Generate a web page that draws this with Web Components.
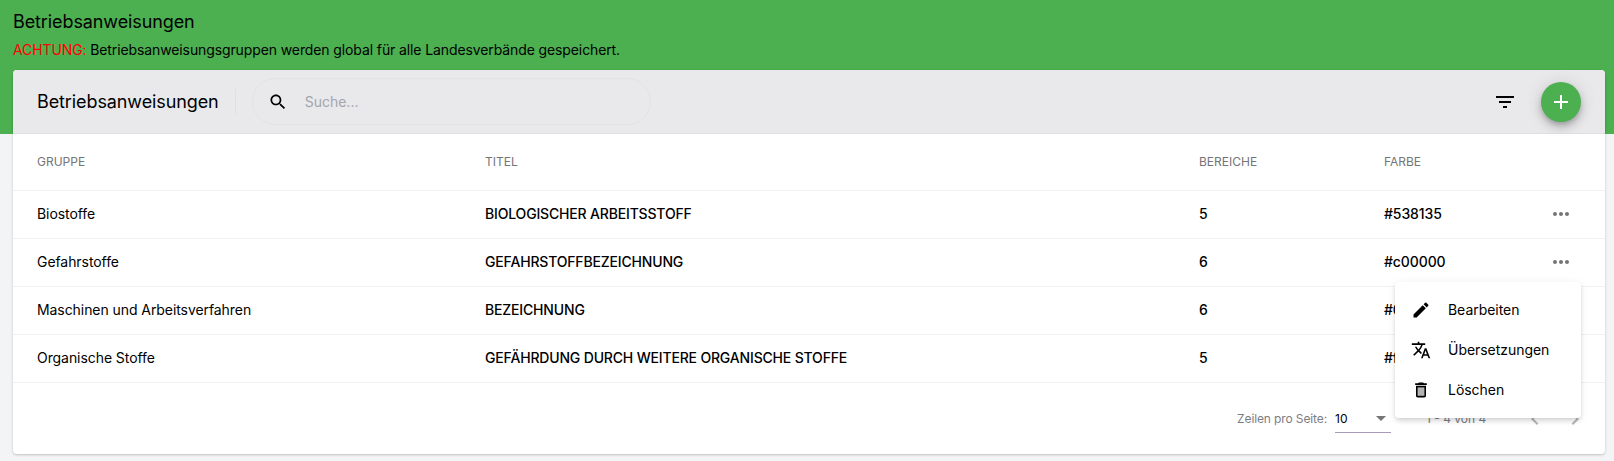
<!DOCTYPE html>
<html lang="de">
<head>
<meta charset="utf-8">
<title>Betriebsanweisungen</title>
<style>
    html, body { margin: 0; height: 100%; }
    body { background: #f3f4f6; font-family: Inter, "Liberation Sans", sans-serif; color: #000; overflow: hidden; }
    ba-header b { font-weight: 400; color: #f00; }
</style>
</head>
<body>
<ba-page>
    <ba-header slot="header">
        <span slot="title">Betriebsanweisungen</span>
        <span slot="note"><b>ACHTUNG:</b> Betriebsanweisungsgruppen werden global für alle Landesverbände gespeichert.</span>
    </ba-header>
    <ba-card>
        <ba-toolbar heading="Betriebsanweisungen" placeholder="Suche..."></ba-toolbar>
        <ba-row head a="GRUPPE" b="TITEL" c="BEREICHE" d="FARBE"></ba-row>
        <ba-row a="Biostoffe" b="BIOLOGISCHER ARBEITSSTOFF" c="5" d="#538135"></ba-row>
        <ba-row a="Gefahrstoffe" b="GEFAHRSTOFFBEZEICHNUNG" c="6" d="#c00000"></ba-row>
        <ba-row a="Maschinen und Arbeitsverfahren" b="BEZEICHNUNG" c="6" d="#0070c0" nodots></ba-row>
        <ba-row a="Organische Stoffe" b="GEFÄHRDUNG DURCH WEITERE ORGANISCHE STOFFE" c="5" d="#ffc000" nodots></ba-row>
        <ba-paginator></ba-paginator>
    </ba-card>
    <ba-menu>
        <ba-menu-item icon="edit">Bearbeiten</ba-menu-item>
        <ba-menu-item icon="translate">Übersetzungen</ba-menu-item>
        <ba-menu-item icon="delete">Löschen</ba-menu-item>
    </ba-menu>
</ba-page>

<script>
    const ICONS = {
        search: '<path d="M15.5 14h-.79l-.28-.27C15.41 12.59 16 11.11 16 9.5 16 5.91 13.09 3 9.5 3S3 5.91 3 9.5 5.91 16 9.5 16c1.61 0 3.09-.59 4.23-1.57l.27.28v.79l5 4.99L20.49 19l-4.99-5zm-6 0C7.01 14 5 11.99 5 9.5S7.01 5 9.5 5 14 7.01 14 9.5 11.99 14 9.5 14z"/>',
        filter: '<path d="M10 18h4v-2h-4v2zM3 6v2h18V6H3zm3 7h12v-2H6v2z"/>',
        add: '<path d="M19 13h-6v6h-2v-6H5v-2h6V5h2v6h6v2z"/>',
        more: '<path d="M6 10c-1.1 0-2 .9-2 2s.9 2 2 2 2-.9 2-2-.9-2-2-2zm12 0c-1.1 0-2 .9-2 2s.9 2 2 2 2-.9 2-2-.9-2-2-2zm-6 0c-1.1 0-2 .9-2 2s.9 2 2 2 2-.9 2-2-.9-2-2-2z"/>',
        edit: '<path d="M3 17.25V21h3.75L17.81 9.94l-3.75-3.75L3 17.25zM20.71 7.04c.39-.39.39-1.02 0-1.41l-2.34-2.34c-.39-.39-1.02-.39-1.41 0l-1.83 1.83 3.75 3.75 1.83-1.83z"/>',
        translate: '<path d="M12.87 15.07l-2.54-2.51.03-.03c1.74-1.94 2.98-4.17 3.71-6.53H17V4h-7V2H8v2H1v1.99h11.17C11.5 7.92 10.44 9.75 9 11.35 8.07 10.32 7.3 9.19 6.69 8h-2c.73 1.63 1.73 3.17 2.98 4.56l-5.09 5.02L4 19l5-5 3.11 3.11.76-2.04zM18.5 10h-2L12 22h2l1.12-3h4.75L21 22h2l-4.5-12zm-2.62 7l1.62-4.33L19.12 17h-3.24z"/>',
        delete: '<path opacity=".3" d="M8 9h8v10H8z"/><path d="M15.5 4l-1-1h-5l-1 1H5v2h14V4zM6 19c0 1.1.9 2 2 2h8c1.1 0 2-.9 2-2V7H6v12zM8 9h8v10H8V9z"/>',
        left: '<path d="M15.41 7.41L14 6l-6 6 6 6 1.41-1.41L10.83 12z"/>',
        right: '<path d="M10 6L8.59 7.41 13.17 12l-4.58 4.59L10 18l6-6z"/>'
    };

    function shadow(el, html) {
        el.attachShadow({ mode: 'open' }).innerHTML = html;
    }

    class BaIcon extends HTMLElement {
        connectedCallback() {
            if (this.shadowRoot) return;
            const size = this.getAttribute('size') || 24;
            shadow(this, `
                <style>
                    :host{ display: inline-flex; width: ${size}px; height: ${size}px; flex: none; }
                    svg{ width: 100%; height: 100%; fill: currentColor; display: block; }
                </style>
                <svg viewBox="0 0 24 24">${ICONS[this.getAttribute('name')]}</svg>
            `);
        }
    }
    customElements.define('ba-icon', BaIcon);

    class BaPage extends HTMLElement {
        constructor() {
            super();
            shadow(this, `
                <style>
                    :host{ display: block; position: relative; width: 1614px; height: 461px; }
                </style>
                <slot name="header"></slot>
                <slot></slot>
            `);
        }
    }
    customElements.define('ba-page', BaPage);

    class BaHeader extends HTMLElement {
        constructor() {
            super();
            shadow(this, `
                <style>
                    :host{ display: block; height: 134px; box-sizing: border-box; padding: 11px 13px 0; background: #4caf50; }
                    .title{ font-size: 18px; line-height: 22px; letter-spacing: -.1px; }
                    .note{ margin-top: 6px; font-size: 14px; line-height: 21px; letter-spacing: -.11px; }
                    ::slotted(span) { display: block; }
                </style>
                <div class="title"><slot name="title"></slot></div>
                <div class="note"><slot name="note"></slot></div>
            `);
        }
    }
    customElements.define('ba-header', BaHeader);

    class BaCard extends HTMLElement {
        constructor() {
            super();
            shadow(this, `
                <style>
                    :host{
                        display: block;
                        position: relative;
                        margin: -64px 9px 0 13px;
                        background: #fff;
                        border-radius: 4px;
                        overflow: hidden;
                        box-shadow: 0 1px 3px rgba(0,0,0,.14), 0 1px 2px rgba(0,0,0,.08);
                    }
                </style>
                <slot></slot>
            `);
        }
    }
    customElements.define('ba-card', BaCard);

    class BaToolbar extends HTMLElement {
        connectedCallback() {
            if (this.shadowRoot) return;
            shadow(this, `
                <style>
                    :host{
                        display: flex;
                        align-items: center;
                        height: 64px;
                        box-sizing: border-box;
                        padding: 0 24px;
                        background: #e9e9ec;
                        border-bottom: 1px solid #e0e0e2;
                    }
                    h2{ margin: 0; padding-right: 16px; font-size: 18px; font-weight: 400; line-height: 26px; letter-spacing: -.1px; border-right: 1px solid #e0e0e3; }
                    .search{
                        display: flex;
                        align-items: center;
                        box-sizing: border-box;
                        width: 399px;
                        height: 47px;
                        margin-left: 16px;
                        padding: 0 15px;
                        border: 1px solid #e2e2e5;
                        border-radius: 24px;
                        font-size: 14px;
                        color: #a3a5ad;
                    }
                    .search ba-icon{ color: #000; margin-right: 17px; }
                    .end{ margin-left: auto; display: flex; align-items: center; gap: 24px; }
                    .fab{
                        width: 40px;
                        height: 40px;
                        border-radius: 50%;
                        background: #4caf50;
                        color: #fff;
                        display: flex;
                        align-items: center;
                        justify-content: center;
                        box-shadow: 0 3px 5px -1px rgba(0,0,0,.2), 0 6px 10px rgba(0,0,0,.14), 0 1px 18px rgba(0,0,0,.12);
                    }
                </style>
                <h2>${this.getAttribute('heading')}</h2>
                <div class="search"><ba-icon name="search" size="20"></ba-icon><span>${this.getAttribute('placeholder')}</span></div>
                <div class="end">
                    <ba-icon name="filter"></ba-icon>
                    <div class="fab"><ba-icon name="add"></ba-icon></div>
                </div>
            `);
        }
    }
    customElements.define('ba-toolbar', BaToolbar);

    class BaRow extends HTMLElement {
        connectedCallback() {
            if (this.shadowRoot) return;
            const attr = (n) => this.getAttribute(n) || '';
            const dots = this.hasAttribute('head') || this.hasAttribute('nodots') ? '' : '<ba-icon name="more"></ba-icon>';
            shadow(this, `
                <style>
                    :host{
                        display: grid;
                        grid-template-columns: 448px 714px 185px 1fr 56px;
                        align-items: center;
                        height: 48px;
                        box-sizing: border-box;
                        padding-bottom: 2px;
                        border-bottom: 1px solid #f1f1f3;
                        font-size: 14px;
                    }
                    :host([head]){ height: 57px; font-size: 12px; color: #757575; }
                    span{ padding-left: 24px; }
                    .a{ letter-spacing: -.07px; }
                    .b{ font-weight: 500; letter-spacing: -.17px; }
                    .c, .d{ font-weight: 500; letter-spacing: -.1px; }
                    :host([head]) span{ font-weight: 400; letter-spacing: 0; }
                    .dots{ display: flex; color: #757575; }
                </style>
                <span class="a">${attr('a')}</span>
                <span class="b">${attr('b')}</span>
                <span class="c">${attr('c')}</span>
                <span class="d">${attr('d')}</span>
                <div class="dots">${dots}</div>
            `);
        }
    }
    customElements.define('ba-row', BaRow);

    class BaPaginator extends HTMLElement {
        constructor() {
            super();
            shadow(this, `
                <style>
                    :host{
                        display: flex;
                        align-items: center;
                        justify-content: flex-end;
                        height: 71px;
                        box-sizing: border-box;
                        padding: 0 18px 0 0;
                        font-size: 12px;
                        color: #7b7d84;
                    }
                    .label{ letter-spacing: -.12px; }
                    .select{
                        display: flex;
                        align-items: center;
                        justify-content: space-between;
                        box-sizing: border-box;
                        width: 56px;
                        height: 29px;
                        margin-left: 8px;
                        border-bottom: 1px solid #a89bb5;
                        color: #000;
                    }
                    .arrow{ width: 0; height: 0; margin-right: 5px; border: 5px solid transparent; border-top-color: #757575; border-bottom: 0; }
                    .range{ margin-left: 35px; width: 97px; }
                    .pager{ display: flex; gap: 16px; color: #b4b6bb; }
                </style>
                <span class="label">Zeilen pro Seite:</span>
                <div class="select"><span>10</span><i class="arrow"></i></div>
                <span class="range">1 - 4 von 4</span>
                <div class="pager"><ba-icon name="left"></ba-icon><ba-icon name="right"></ba-icon></div>
            `);
        }
    }
    customElements.define('ba-paginator', BaPaginator);

    class BaMenu extends HTMLElement {
        constructor() {
            super();
            shadow(this, `
                <style>
                    :host{
                        display: block;
                        position: absolute;
                        left: 1395px;
                        top: 282px;
                        width: 186px;
                        box-sizing: border-box;
                        padding: 8px 0;
                        background: #fff;
                        border-radius: 4px;
                        box-shadow: 0 2px 4px -1px rgba(0,0,0,.1), 0 4px 5px rgba(0,0,0,.07), 0 1px 10px rgba(0,0,0,.06);
                    }
                </style>
                <slot></slot>
            `);
        }
    }
    customElements.define('ba-menu', BaMenu);

    class BaMenuItem extends HTMLElement {
        connectedCallback() {
            if (this.shadowRoot) return;
            shadow(this, `
                <style>
                    :host{
                        display: flex;
                        align-items: center;
                        height: 40px;
                        padding: 0 16px;
                        font-size: 14px;
                        letter-spacing: -.04px;
                    }
                    ba-icon{ margin-right: 17px; }
                    span{ padding-bottom: 2px; }
                </style>
                <ba-icon name="${this.getAttribute('icon')}" size="20"></ba-icon>
                <span><slot></slot></span>
            `);
        }
    }
    customElements.define('ba-menu-item', BaMenuItem);
</script>
</body>
</html>
